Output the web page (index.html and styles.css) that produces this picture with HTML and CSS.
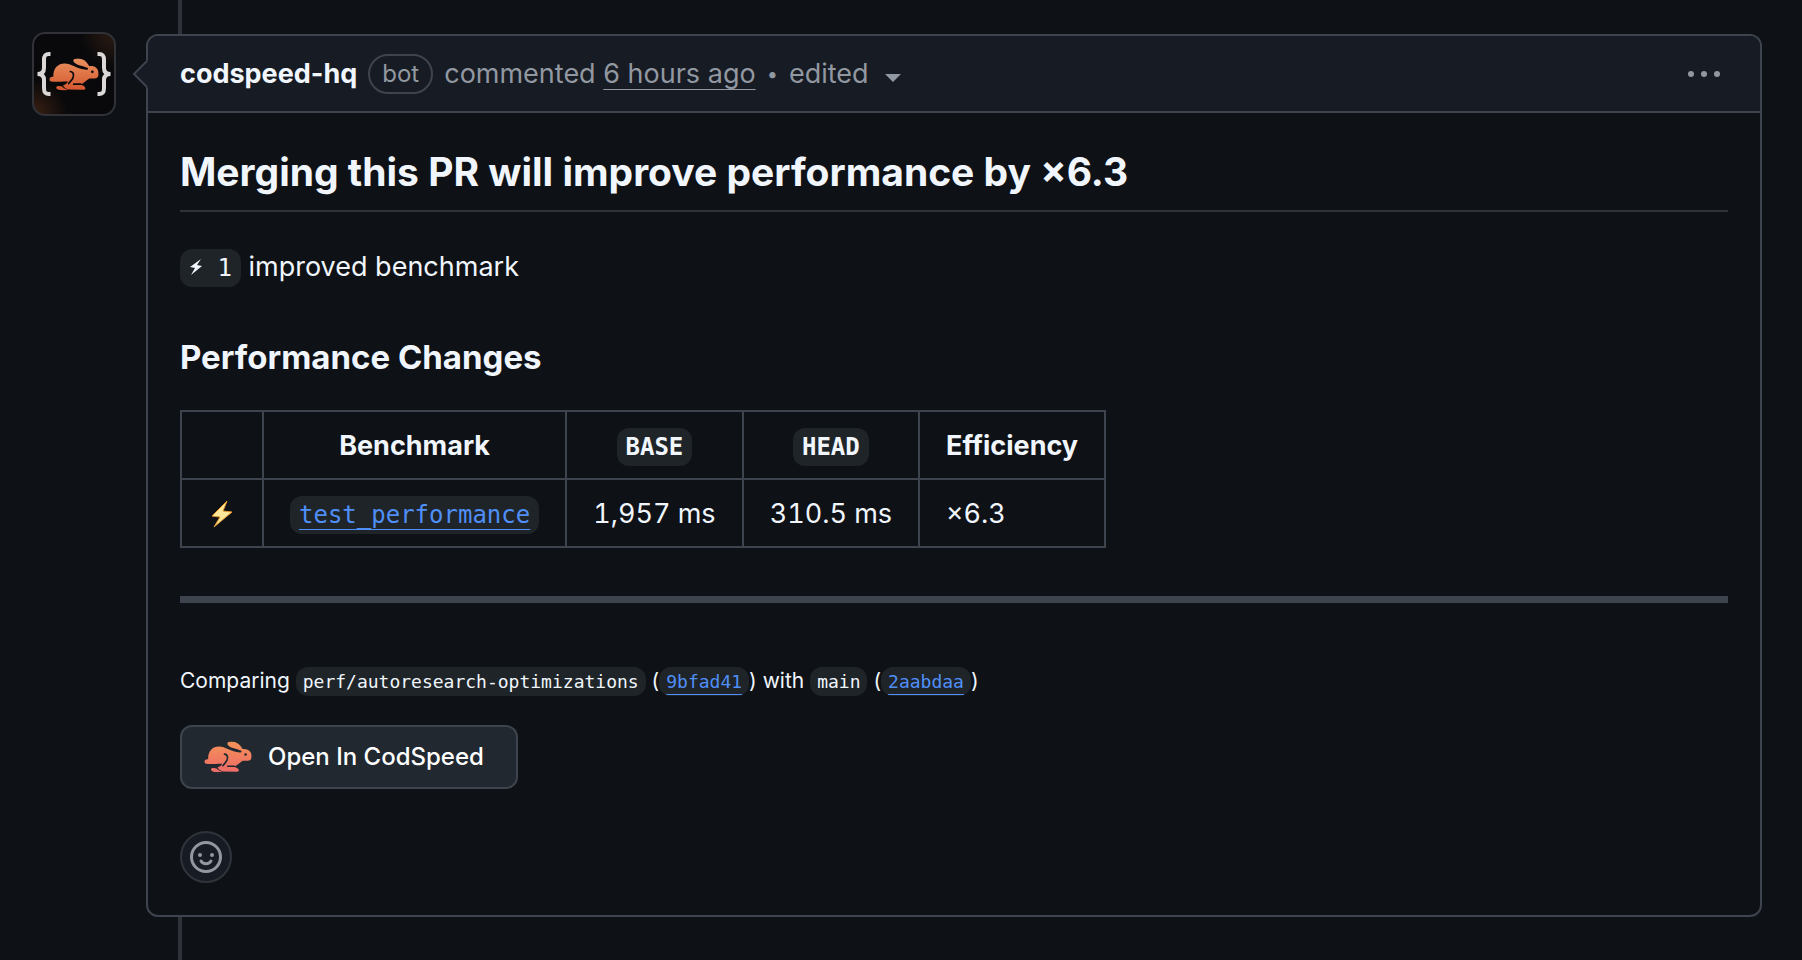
FILE: index.html
```html
<!DOCTYPE html>
<html lang="en">
<head>
    <meta charset="UTF-8">
    <meta name="viewport" content="width=device-width, initial-scale=1.0">
    <title>codspeed-hq comment</title>
    <link rel="stylesheet" href="styles.css">
</head>
<body>
    <svg class="sprite" aria-hidden="true">
        <defs>
            <linearGradient id="fur" x1="0" y1="0" x2="0" y2="1">
                <stop offset="0" stop-color="#e8915f"/>
                <stop offset="1" stop-color="#d6562e"/>
            </linearGradient>
            <linearGradient id="fur-bright" x1="0" y1="0" x2="0" y2="1">
                <stop offset="0" stop-color="#f49358"/>
                <stop offset="1" stop-color="#ee6a68"/>
            </linearGradient>
            <clipPath id="rabbit">
                <path d="M1 64C1 58 7 55 13 56C12 31 26 16 47 16C66 16 84 32 112 35C118 35 119 32 115 29C102 22 84 22 75 12C69 4 77 0 90 1C107 3 115 14 121 24C136 22 145 29 148 40C151 53 147 61 136 61L121 61C112 67 104 75 94 80C103 82 110 86 109 92C108 95 104 95 99 95L60 94C52 93 45 88 42 82C49 79 55 75 57 70L44 70C30 72 10 71 4 69C2 68 1 66 1 64Z"/>
                <path d="M22 87C23 82 34 83 39 85C44 90 50 93 58 95C47 98 35 97 28 94C23 92 21 90 22 87Z"/>
            </clipPath>
        </defs>
    </svg>

    <main class="timeline">
        <a class="avatar" href="#" aria-label="codspeed-hq">
            <svg viewBox="0 0 80 80" aria-hidden="true">
                <path class="brace" d="M16.500 20H15C10.500 20 10 22.500 10 26V34C10 37.500 8 40 3.500 40C8 40 10 42.500 10 46V54C10 57.500 10.500 60 15 60H16.500"/>
                <path class="brace" d="M63.500 20H65C69.500 20 70 22.500 70 26V34C70 37.500 72 40 76.500 40C72 40 70 42.500 70 46V54C70 57.500 69.500 60 65 60H63.500"/>
                <svg x="15" y="24" width="50" height="33" viewBox="0 0 150 98">
                    <rect width="150" height="98" fill="url(#fur)" clip-path="url(#rabbit)"/>
                    <path class="avatar-line" d="M64 40C76 41 77 57 65 69L59 76M74 78L95 78"/>
                    <circle cx="130" cy="41" r="4" fill="#0b0b0d"/>
                </svg>
            </svg>
        </a>

        <div class="thread">
            <article class="comment">
                <svg class="caret" viewBox="0 0 16 28" aria-hidden="true">
                    <path d="M16 0L2 14L16 28Z" fill="#171b23"/>
                    <path d="M15 1L2 14L15 27" fill="none" stroke="#3d444d" stroke-width="2"/>
                </svg>
                <header class="comment-header">
                    <a class="author" href="#">codspeed-hq</a>
                    <span class="label">bot</span>
                    <span>commented <a class="time" href="#">6 hours ago</a></span>
                    <span class="dot">•</span>
                    <button class="edited" type="button">edited
                        <svg viewBox="0 0 16 8" aria-hidden="true"><path d="M0 0H16L8 8Z" fill="currentColor"/></svg>
                    </button>
                    <button class="menu" type="button" aria-label="Show options">
                        <svg viewBox="0 0 32 6" aria-hidden="true" fill="currentColor"><circle cx="3" cy="3" r="3"/><circle cx="16" cy="3" r="3"/><circle cx="29" cy="3" r="3"/></svg>
                    </button>
                </header>

                <div class="comment-body">
                    <h2>Merging this PR will improve performance by ×6.3</h2>
                    <p><code><svg class="bolt" viewBox="0 0 14 18" aria-hidden="true"><path d="M12 1L1 9L6 10L2 17L13 8L8 7Z" fill="currentColor"/></svg> 1</code> improved benchmark</p>
                    <h3>Performance Changes</h3>

                    <table>
                        <thead>
                            <tr>
                                <th></th>
                                <th>Benchmark</th>
                                <th><code>BASE</code></th>
                                <th><code>HEAD</code></th>
                                <th>Efficiency</th>
                            </tr>
                        </thead>
                        <tbody>
                            <tr>
                                <td><svg class="zap" viewBox="0 0 28 28" role="img" aria-label="zap"><path d="M19 1L4 16L12 17L6 27L24 12L15 11Z" fill="#fde79a" stroke="#e8992e" stroke-width="1"/></svg></td>
                                <td><a href="#"><code>test_performance</code></a></td>
                                <td>1,957 ms</td>
                                <td>310.5 ms</td>
                                <td>×6.3</td>
                            </tr>
                        </tbody>
                    </table>

                    <hr>

                    <p class="compare">Comparing <code>perf/autoresearch-optimizations</code> (<a href="#"><code>9bfad41</code></a>) with <code>main</code> (<a href="#"><code>2aabdaa</code></a>)</p>

                    <a class="open-button" href="#">
                        <svg viewBox="0 0 150 98" aria-hidden="true">
                            <rect width="150" height="98" fill="url(#fur-bright)" clip-path="url(#rabbit)"/>
                            <path class="button-line" d="M64 40C76 41 77 57 65 69L59 76M74 78L95 78"/>
                            <circle cx="130" cy="41" r="4" fill="#212830"/>
                        </svg>
                        Open In CodSpeed
                    </a>

                    <button class="reaction" type="button" aria-label="Add reaction">
                        <svg viewBox="0 0 32 32" aria-hidden="true">
                            <circle cx="16" cy="16" r="14.500" fill="none" stroke="currentColor" stroke-width="3"/>
                            <circle cx="10" cy="14" r="2" fill="currentColor"/>
                            <circle cx="22" cy="14" r="2" fill="currentColor"/>
                            <path d="M11 20C13 23.500 19 23.500 21 20" fill="none" stroke="currentColor" stroke-width="3" stroke-linecap="round"/>
                        </svg>
                    </button>
                </div>
            </article>
        </div>
    </main>
</body>
</html>
```
FILE: styles.css
```css
* {
    box-sizing: border-box;
}

body {
    margin: 0;
    background-color: #0e1116;
    color: #f0f6fc;
    font-family: Inter, "Liberation Sans", sans-serif;
    font-size: 27px;
    line-height: 42px;
}

a {
    color: #4f8ff7;
}

button {
    padding: 0;
    border: none;
    background: none;
    color: inherit;
    font: inherit;
    cursor: pointer;
}

svg {
    display: block;
}

.sprite {
    position: absolute;
    width: 0;
    height: 0;
}

.timeline {
    display: flex;
    align-items: flex-start;
    gap: 30px;
    min-height: 100vh;
    padding: 0 40px 0 32px;
}

.avatar {
    flex: none;
    width: 84px;
    height: 84px;
    margin-top: 32px;
    border: 2px solid #303238;
    border-radius: 13px;
    background: radial-gradient(circle at 100% 0, #2c1b12, transparent 30%),
                radial-gradient(circle at 0 100%, #3a2012, transparent 30%),
                #09090b;
}

.brace {
    fill: none;
    stroke: #dcd8d8;
    stroke-width: 4;
}

.avatar-line,
.button-line {
    fill: none;
    stroke: #0b0b0d;
    stroke-width: 5;
    stroke-linecap: round;
}

.button-line {
    stroke: #212830;
}

/* the vertical line runs behind the comment */
.thread {
    flex: 1;
    min-height: 100vh;
    padding: 34px 0 43px;
    background: linear-gradient(#2f3339, #2f3339) 32px 0 / 4px 100% no-repeat;
}

.comment {
    position: relative;
    border: 2px solid #3d444d;
    border-radius: 12px;
    background-color: #0e1116;
}

.caret {
    position: absolute;
    top: 24px;
    left: -16px;
    width: 16px;
    height: 28px;
}

.comment-header {
    display: flex;
    align-items: center;
    gap: 11px;
    height: 77px;
    padding: 0 40px 0 32px;
    border-bottom: 2px solid #3d444d;
    border-radius: 10px 10px 0 0;
    background-color: #171b23;
    color: #9198a1;
}

.author {
    color: #f0f6fc;
    font-weight: 700;
    text-decoration: none;
}

.label {
    padding: 0 12px;
    border: 2px solid #3d444d;
    border-radius: 20px;
    font-size: 24px;
    line-height: 36px;
}

.time {
    color: inherit;
    text-decoration-thickness: 1px;
    text-underline-offset: 6px;
}

.dot {
    font-size: 20px;
}

.edited {
    display: flex;
    align-items: center;
    gap: 16px;
}

.edited svg {
    width: 16px;
    height: 8px;
    margin-top: 8px;
}

.menu {
    margin-left: auto;
}

.menu svg {
    width: 32px;
    height: 6px;
}

.comment-body {
    padding: 32px;
}

h2 {
    margin: 0 0 34px;
    padding-bottom: 11px;
    border-bottom: 2px solid #2f343b;
    font-size: 39px;
    font-weight: 700;
    line-height: 54px;
}

h3 {
    margin: 48px 0 32px;
    font-size: 33px;
    font-weight: 700;
    line-height: 42px;
}

p {
    margin: 0;
}

code {
    padding: 5px 9px;
    border-radius: 12px;
    background-color: #1f2428;
    font-family: "DejaVu Sans Mono", monospace;
    font-size: 24px;
    line-height: 24px;
}

.bolt {
    display: inline-block;
    width: 14px;
    height: 18px;
}

table {
    border-collapse: collapse;
    font-variant-numeric: tabular-nums;
}

th,
td {
    padding: 13px 26px 11px;
    border: 2px solid #3d444d;
    text-align: left;
}

th {
    font-weight: 700;
    text-align: center;
}

.zap {
    width: 28px;
    height: 28px;
}

hr {
    height: 7px;
    margin: 48px 0 62px;
    border: none;
    background-color: #3d444d;
}

td a,
.compare a {
    text-decoration-thickness: 1px;
    text-underline-offset: 6px;
}

.compare {
    font-size: 21px;
    line-height: 32px;
}

.compare code {
    padding: 4px 7px;
    font-size: 18px;
}

.open-button {
    display: flex;
    align-items: center;
    gap: 16px;
    width: fit-content;
    height: 64px;
    margin-top: 28px;
    padding: 0 32px 0 22px;
    border: 2px solid #3d444d;
    border-radius: 12px;
    background-color: #212830;
    color: #ffffff;
    font-size: 24px;
    font-weight: 500;
    text-decoration: none;
}

.open-button svg {
    width: 48px;
    height: 32px;
}

.reaction {
    display: flex;
    align-items: center;
    justify-content: center;
    width: 52px;
    height: 52px;
    margin-top: 42px;
    border: 2px solid #2f343b;
    border-radius: 50%;
    background-color: #171b23;
    color: #9198a1;
}

.reaction svg {
    width: 32px;
    height: 32px;
}
```
